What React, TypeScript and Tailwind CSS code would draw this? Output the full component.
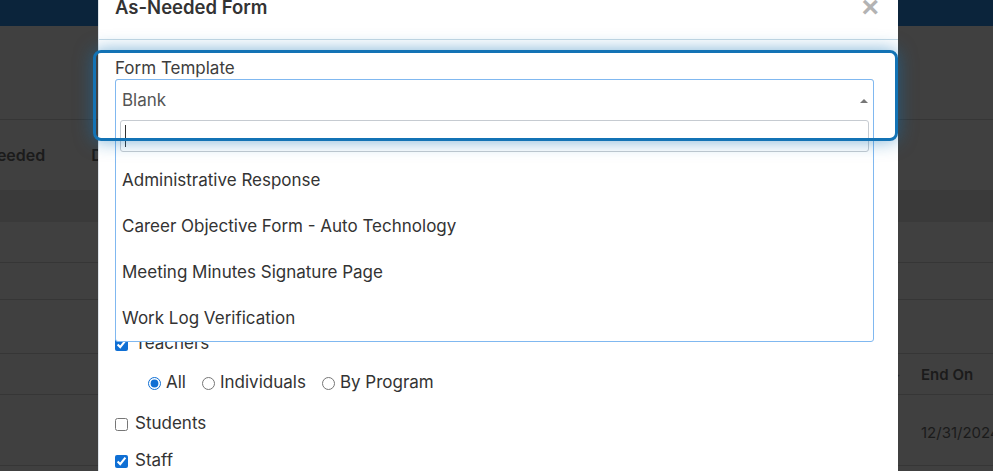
import React from "react"

const options = [
    "Administrative Response",
    "Career Objective Form - Auto Technology",
    "Meeting Minutes Signature Page",
    "Work Log Verification",
]

function Backdrop() {
    return (
        <div className="flex flex-col text-[#1b1b1b]">
            <div className="h-[26px] bg-[#0b243b]" />
            <div className="h-[94px] border-b border-[#363636]" />
            <div className="h-[70px] flex items-center gap-[46px] text-[16px] font-semibold">
                <span className="-ml-[43px]">As-Needed</span>
                <span>Drafts</span>
            </div>
            <div className="h-[32px] bg-[#3a3a3a]" />
            <div className="h-[41px] border-b border-[#363636]" />
            <div className="h-[37px] border-b border-[#363636]" />
            <div className="h-[54px] border-b border-[#363636]" />
            <div className="h-[41px] pt-[2px] border-b border-[#363636] grid grid-cols-[921px_1fr] items-center text-[15px] font-semibold">
                <span className="justify-self-end pr-[20px] text-[#2a2a2a] font-normal">↓</span>
                <span className="whitespace-nowrap">End On</span>
            </div>
            <div className="h-[71px] pt-[6px] border-b border-[#363636] grid grid-cols-[921px_1fr] items-center text-[15px]">
                <span />
                <span className="whitespace-nowrap">12/31/2024</span>
            </div>
        </div>
    )
}

function Check({ label, checked }: { label: string, checked?: boolean }) {
    return (
        <label className="flex items-center gap-[7px] h-[24px] text-[17px] text-[#333]">
            <input type="checkbox" defaultChecked={checked} className="m-0 w-[13px] h-[13px] accent-[#0f6fd4]" />
            {label}
        </label>
    )
}

function Radio({ label, checked }: { label: string, checked?: boolean }) {
    return (
        <label className="flex items-center gap-[5px] text-[17px] text-[#333]">
            <input type="radio" name="teachers" defaultChecked={checked} className="m-0 w-[13px] h-[13px] accent-[#0f6fd4]" />
            {label}
        </label>
    )
}

function TemplateSelect() {
    return (
        <div className="relative h-[40px] border border-[#ccd2d8] rounded-[3px]">
            {/* open dropdown panel */}
            <div className="absolute -inset-x-px -top-px z-10 bg-white border border-[#80b8f0] rounded-[3px]">
                <div className="h-[40px] pt-px flex items-center justify-between pl-[6px] pr-[5px]">
                    <span className="text-[17px] text-[#555]">Blank</span>
                    <span className="w-0 h-0 border-x-[4px] border-x-transparent border-b-[4px] border-b-[#777]" />
                </div>
                <div className="mx-[4px] h-[32px] border border-[#c6cbd1] rounded-[3px] flex items-center pl-[4px]">
                    <span className="w-px h-[22px] bg-[#333]" />
                </div>
                <ul className="pt-[4px] pb-px">
                    {options.map((o) => (
                        <li key={o} className="h-[46px] pt-[4px] flex items-center px-[6px] text-[17px] text-[#333]">{o}</li>
                    ))}
                </ul>
            </div>
        </div>
    )
}

export default function App() {
    return (
        <div className="relative w-[993px] h-[471px] overflow-hidden bg-[#404040] font-['Inter',sans-serif]">
            <Backdrop />

            <div className="absolute left-[98px] top-[-20px] w-[800px] h-[520px] bg-white border-l border-[#dde3e8]">
                <div className="flex items-center justify-between pl-[16px] pr-[19px] pt-[14px] pb-[19px] border-b border-[#c8dae5]">
                    <h2 className="text-[18.5px] leading-[26px] font-semibold text-[#333]">As-Needed Form</h2>
                    <button className="text-[30px] leading-[26px] font-bold text-[#b3b3b3] font-['Liberation_Sans',sans-serif]">&times;</button>
                </div>

                <div className="pl-[16px] pr-[24px] pt-[17px]">
                    <p className="text-[17px] leading-[22px] text-[#3d3d3d]">Form Template</p>
                    <TemplateSelect />

                    <div className="mt-[213px]">
                        <Check label="Teachers" checked />
                        <div className="mt-[15px] h-[24px] pl-[33px] flex items-center gap-[16px]">
                            <Radio label="All" checked />
                            <Radio label="Individuals" />
                            <Radio label="By Program" />
                        </div>
                        <div className="mt-[17px]"><Check label="Students" /></div>
                        <div className="mt-[13px]"><Check label="Staff" checked /></div>
                    </div>
                </div>
            </div>

            {/* tour highlight around the template field */}
            <div className="absolute left-[93px] top-[50px] w-[805px] h-[91px] z-20 border-[3px] border-[#1373b5] rounded-[8px] shadow-[0_0_18px_rgba(19,115,181,0.55)]" />
        </div>
    )
}
